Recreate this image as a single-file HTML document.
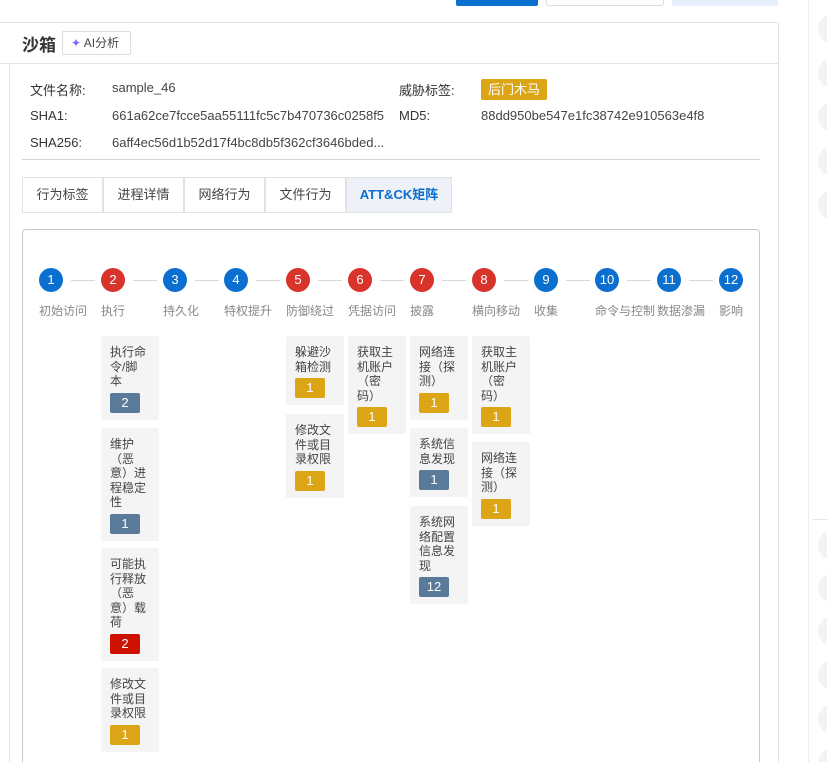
<!DOCTYPE html>
<html style="height:762px;overflow:hidden"><head><meta charset="utf-8"><style>
*{box-sizing:border-box;margin:0;padding:0}
body{width:827px;height:762px;overflow:hidden;background:#fff;font-family:"Liberation Sans","Noto Sans CJK SC",sans-serif;color:#333;position:relative}
.a{position:absolute}
.lbl{font-size:13px;color:#333}
.val{font-size:13px;color:#444}
.tab{position:absolute;top:177px;height:36px;width:81px;border:1px solid #e2e2e2;font-size:13px;color:#444;text-align:center;line-height:34px;background:#fff}
.c{position:absolute;top:268px;width:24px;height:24px;border-radius:50%;color:#fff;font-size:13px;text-align:center;line-height:24px}
.b{background:#0a6fcf}.r{background:#d9342b}
.ln{position:absolute;top:280px;height:1px;background:#d8d8d8;width:24px}
.sl{position:absolute;top:302px;font-size:12px;color:#888;white-space:nowrap}
.cd{position:absolute;width:58px;background:#f4f4f4;border-radius:2px;padding:9px 0 7px 9px;font-size:12px;line-height:14.5px;color:#444}
.bg{width:30px;height:20px;border-radius:2px;color:#fff;text-align:center;line-height:20px;margin-top:4px;font-size:13px}
.g{background:#5a7a9a}.y{background:#dca515}.rr{background:#cc1100}
.dot{position:absolute;left:818px;width:30px;height:30px;border-radius:50%;background:#f2f3f5}
</style></head><body>
<div class="a" style="left:456px;top:0;width:82px;height:6px;background:#0a6fcf;border-radius:0 0 2px 2px"></div>
<div class="a" style="left:546px;top:-2px;width:118px;height:8px;border:1px solid #ddd;border-radius:3px"></div>
<div class="a" style="left:672px;top:0;width:106px;height:6px;background:#e6effc"></div>
<div class="a" style="left:808px;top:0;width:1px;height:762px;background:#ececec"></div>
<div class="a" style="left:813px;top:519px;width:14px;height:1px;background:#e6e6e6"></div>
<div class="dot" style="top:14px"></div><div class="dot" style="top:58px"></div><div class="dot" style="top:102px"></div><div class="dot" style="top:146px"></div><div class="dot" style="top:190px"></div>
<div class="dot" style="top:530px"></div><div class="dot" style="top:573px"></div><div class="dot" style="top:616px"></div><div class="dot" style="top:660px"></div><div class="dot" style="top:704px"></div><div class="dot" style="top:748px"></div>
<div class="a" style="left:0;top:22px;width:779px;height:760px;border:1px solid #e4e4e4;border-left:none"></div>
<div class="a" style="left:9px;top:63px;width:1px;height:700px;background:#e4e4e4"></div>
<div class="a" style="left:0;top:63px;width:778px;height:1px;background:#e4e4e4"></div>
<div class="a" style="left:22px;top:31px;font-size:17px;font-weight:bold;color:#333">沙箱</div>
<div class="a" style="left:62px;top:31px;width:69px;height:24px;border:1px solid #ddd;border-radius:2px;font-size:12px;color:#444;line-height:22px;padding-left:8px"><span style="color:#7a6cf0">✦</span> AI分析</div>
<div class="a lbl" style="left:30px;top:80px">文件名称:</div>
<div class="a val" style="left:112px;top:80px">sample_46</div>
<div class="a lbl" style="left:399px;top:80px">威胁标签:</div>
<div class="a" style="left:481px;top:79px;width:66px;height:21px;background:#dca515;border-radius:2px;color:#fff;font-size:13px;text-align:center;line-height:21px">后门木马</div>
<div class="a lbl" style="left:30px;top:108px">SHA1:</div>
<div class="a val" style="left:112px;top:108px">661a62ce7fcce5aa55111fc5c7b470736c0258f5</div>
<div class="a lbl" style="left:399px;top:108px">MD5:</div>
<div class="a val" style="left:481px;top:108px">88dd950be547e1fc38742e910563e4f8</div>
<div class="a lbl" style="left:30px;top:135px">SHA256:</div>
<div class="a val" style="left:112px;top:135px">6aff4ec56d1b52d17f4bc8db5f362cf3646bded...</div>
<div class="a" style="left:22px;top:159px;width:738px;height:1px;background:#d4d4d4"></div>
<div class="tab" style="left:22px">行为标签</div>
<div class="tab" style="left:103px">进程详情</div>
<div class="tab" style="left:184px">网络行为</div>
<div class="tab" style="left:265px">文件行为</div>
<div class="tab" style="left:346px;width:106px;background:#eef1f7;color:#0a6fcf;font-weight:bold">ATT&amp;CK矩阵</div>
<div class="a" style="left:22px;top:229px;width:738px;height:560px;border:1px solid #c8c8c8;border-radius:4px"></div>
<div class="c b" style="left:39px">1</div><div class="c r" style="left:101px">2</div><div class="c b" style="left:163px">3</div><div class="c b" style="left:224px">4</div><div class="c r" style="left:286px">5</div><div class="c r" style="left:348px">6</div><div class="c r" style="left:410px">7</div><div class="c r" style="left:472px">8</div><div class="c b" style="left:534px">9</div><div class="c b" style="left:595px">10</div><div class="c b" style="left:657px">11</div><div class="c b" style="left:719px">12</div>
<div class="ln" style="left:71px"></div><div class="ln" style="left:133px"></div><div class="ln" style="left:195px"></div><div class="ln" style="left:256px"></div><div class="ln" style="left:318px"></div><div class="ln" style="left:380px"></div><div class="ln" style="left:442px"></div><div class="ln" style="left:504px"></div><div class="ln" style="left:566px"></div><div class="ln" style="left:627px"></div><div class="ln" style="left:689px"></div>
<div class="sl" style="left:39px">初始访问</div><div class="sl" style="left:101px">执行</div><div class="sl" style="left:163px">持久化</div><div class="sl" style="left:224px">特权提升</div><div class="sl" style="left:286px">防御绕过</div><div class="sl" style="left:348px">凭据访问</div><div class="sl" style="left:410px">披露</div><div class="sl" style="left:472px">横向移动</div><div class="sl" style="left:534px">收集</div><div class="sl" style="left:595px">命令与控制</div><div class="sl" style="left:657px">数据渗漏</div><div class="sl" style="left:719px">影响</div>
<div class="cd" style="left:101px;top:336px">执行命<br>令/脚<br>本<div class="bg g">2</div></div>
<div class="cd" style="left:101px;top:428px">维护<br>（恶<br>意）进<br>程稳定<br>性<div class="bg g">1</div></div>
<div class="cd" style="left:101px;top:548px">可能执<br>行释放<br>（恶<br>意）载<br>荷<div class="bg rr">2</div></div>
<div class="cd" style="left:101px;top:668px">修改文<br>件或目<br>录权限<div class="bg y">1</div></div>
<div class="cd" style="left:286px;top:336px">躲避沙<br>箱检测<div class="bg y">1</div></div>
<div class="cd" style="left:286px;top:414px">修改文<br>件或目<br>录权限<div class="bg y">1</div></div>
<div class="cd" style="left:348px;top:336px">获取主<br>机账户<br>（密<br>码）<div class="bg y">1</div></div>
<div class="cd" style="left:410px;top:336px">网络连<br>接（探<br>测）<div class="bg y">1</div></div>
<div class="cd" style="left:410px;top:428px">系统信<br>息发现<div class="bg g">1</div></div>
<div class="cd" style="left:410px;top:506px">系统网<br>络配置<br>信息发<br>现<div class="bg g">12</div></div>
<div class="cd" style="left:472px;top:336px">获取主<br>机账户<br>（密<br>码）<div class="bg y">1</div></div>
<div class="cd" style="left:472px;top:442px">网络连<br>接（探<br>测）<div class="bg y">1</div></div>
</body></html>
